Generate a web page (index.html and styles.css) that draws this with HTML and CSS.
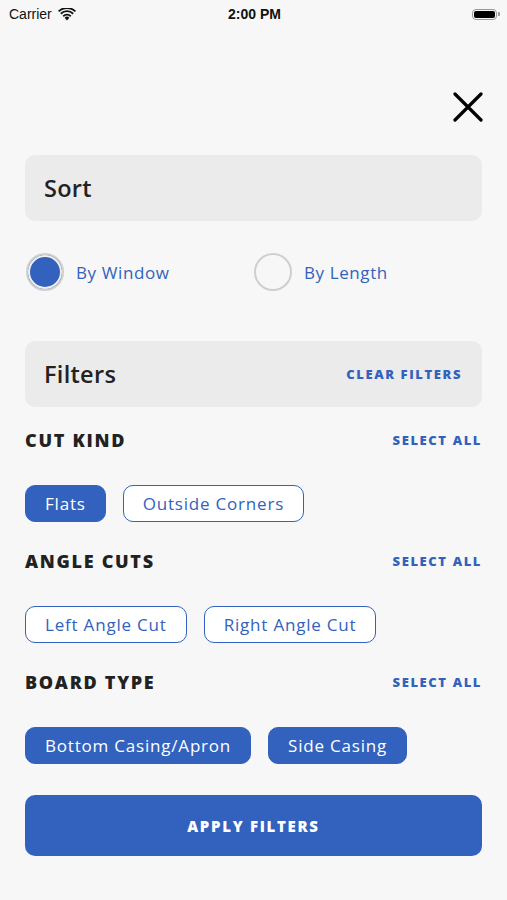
FILE: index.html
```html
<!DOCTYPE html>
<html lang="en">
<head>
  <meta charset="UTF-8" />
  <meta name="viewport" content="width=device-width, initial-scale=1.0"/>
  <title>Sort &amp; Filters</title>
  <link rel="stylesheet" href="styles.css">
</head>
<body>
  <div class="statusbar">
    <div class="carrier">
      Carrier
      <svg class="wifi" width="18" height="13" viewBox="0 0 18 13">
        <path d="M9 12.5 L6.6 9.8 A3.4 3.4 0 0 1 11.4 9.8 Z" fill="#111"/>
        <path d="M4.6 7.6 A6.3 6.3 0 0 1 13.4 7.6 L12.2 8.9 A4.6 4.6 0 0 0 5.8 8.9 Z" fill="#111"/>
        <path d="M2.2 5.1 A9.8 9.8 0 0 1 15.8 5.1 L14.6 6.4 A8 8 0 0 0 3.4 6.4 Z" fill="#111"/>
        <path d="M0 2.7 A13 13 0 0 1 18 2.7 L16.8 4 A11.3 11.3 0 0 0 1.2 4 Z" fill="#111"/>
      </svg>
    </div>
    <div class="clock">2:00 PM</div>
    <div class="battery"><span class="battery-body"><span class="battery-fill"></span></span><span class="battery-tip"></span></div>
  </div>

  <main class="sheet">
    <div class="close-row">
      <button type="button" class="close-btn" aria-label="Close">
        <svg width="30" height="30" viewBox="0 0 30 30">
          <path d="M2 2 L28 28 M28 2 L2 28" stroke="#000" stroke-width="3.2" stroke-linecap="round"/>
        </svg>
      </button>
    </div>

    <div class="panel">
      <h2>Sort</h2>
    </div>

    <div class="radios">
      <label class="radio checked"><span class="dot"></span>By Window</label>
      <label class="radio"><span class="dot"></span>By Length</label>
    </div>

    <div class="panel panel-filters">
      <h2>Filters</h2>
      <a class="link">CLEAR FILTERS</a>
    </div>

    <section class="group">
      <div class="group-head">
        <h3>CUT KIND</h3>
        <a class="link">SELECT ALL</a>
      </div>
      <div class="chips">
        <span class="chip on">Flats</span>
        <span class="chip">Outside Corners</span>
      </div>
    </section>

    <section class="group">
      <div class="group-head">
        <h3>ANGLE CUTS</h3>
        <a class="link">SELECT ALL</a>
      </div>
      <div class="chips">
        <span class="chip">Left Angle Cut</span>
        <span class="chip">Right Angle Cut</span>
      </div>
    </section>

    <section class="group">
      <div class="group-head">
        <h3>BOARD TYPE</h3>
        <a class="link">SELECT ALL</a>
      </div>
      <div class="chips">
        <span class="chip on">Bottom Casing/Apron</span>
        <span class="chip on">Side Casing</span>
      </div>
    </section>

    <button type="button" class="apply-btn">APPLY FILTERS</button>
  </main>
</body>
</html>
```

FILE: styles.css
```css
body {
  margin: 0;
  background: #f7f7f7;
  font-family: 'Open Sans', sans-serif;
  color: #222;
}
.statusbar {
  height: 28px;
  display: flex;
  align-items: center;
  justify-content: space-between;
  padding: 0 7px 0 9px;
  font-family: 'Liberation Sans', sans-serif;
  font-size: 14px;
  color: #111;
}
.carrier {
  display: flex;
  align-items: center;
  gap: 6px;
  width: 120px;
}
.clock {
  font-weight: bold;
}
.battery {
  width: 120px;
  display: flex;
  justify-content: flex-end;
  align-items: center;
}
.battery-body {
  width: 25px;
  height: 11px;
  border: 1.5px solid #999;
  border-radius: 4px;
  padding: 1px;
  box-sizing: border-box;
  display: flex;
}
.battery-fill {
  flex: 1;
  background: #000;
  border-radius: 2px;
}
.battery-tip {
  width: 2px;
  height: 4px;
  background: #999;
  border-radius: 0 1px 1px 0;
  margin-left: 1px;
}
.sheet {
  padding: 0 25px;
}
.close-row {
  display: flex;
  justify-content: flex-end;
  padding-top: 64px;
  height: 63px;
}
.close-btn {
  background: none;
  border: none;
  padding: 0;
  margin-right: -1px;
  width: 30px;
  height: 30px;
  cursor: pointer;
}
.panel {
  height: 66px;
  background: #ebebeb;
  border-radius: 10px;
  display: flex;
  align-items: center;
  justify-content: space-between;
  padding: 0 20px 0 19px;
}
.panel h2 {
  margin: 0;
  font-size: 23.5px;
  font-weight: 600;
  letter-spacing: 0.3px;
  color: #222;
}
.panel-filters {
  margin-top: 50px;
}
.radios {
  display: flex;
  margin-top: 32px;
  height: 38px;
}
.radio {
  width: 231px;
  display: flex;
  align-items: center;
  gap: 12px;
  font-size: 17px;
  letter-spacing: 0.6px;
  color: #3262bd;
}
.radio:first-child {
  padding-left: 1px;
}
.dot {
  width: 38px;
  height: 38px;
  box-sizing: border-box;
  border-radius: 50%;
  border: 2px solid #cfcfcf;
  background: #f7f7f7;
}
.radio.checked .dot {
  background: #3262bd;
  box-shadow: inset 0 0 0 2px #f0f0f0;
}
.link {
  font-size: 13px;
  font-weight: 800;
  letter-spacing: 1.6px;
  color: #3262bd;
  cursor: pointer;
}
.group {
  margin-top: 21px;
}
.group + .group {
  margin-top: 27px;
}
.group-head {
  height: 24px;
  display: flex;
  align-items: center;
  justify-content: space-between;
}
.group-head h3 {
  margin: 0;
  font-size: 18px;
  font-weight: 800;
  letter-spacing: 1.7px;
  color: #222;
}
.chips {
  display: flex;
  gap: 17px;
  margin-top: 33px;
}
.chip {
  height: 37px;
  box-sizing: border-box;
  display: flex;
  align-items: center;
  padding: 0 19px;
  border: 1.5px solid #3262bd;
  border-radius: 10px;
  font-size: 17px;
  letter-spacing: 0.8px;
  color: #3262bd;
  background: #fff;
}
.chip.on {
  background: #3262bd;
  color: #fff;
}
.apply-btn {
  display: block;
  width: 100%;
  height: 61px;
  margin-top: 31px;
  border: none;
  border-radius: 10px;
  background: #3262bd;
  color: #fff;
  font-family: 'Open Sans', sans-serif;
  font-size: 15px;
  font-weight: 800;
  letter-spacing: 1.7px;
  cursor: pointer;
}
```
